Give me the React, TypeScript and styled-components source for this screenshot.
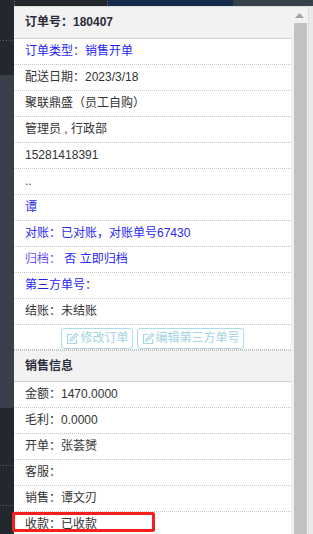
import React from "react";
import styled, { createGlobalStyle } from "styled-components";

const Global = createGlobalStyle`
  html, body { margin: 0; padding: 0; background: #23272e; }
  body { font-family: "Liberation Sans", "Noto Sans CJK SC", sans-serif; }
  * { box-sizing: border-box; }
`;

const Page = styled.div`
  width: 313px;
  height: 534px;
  overflow: hidden;
  display: flex;
  flex-direction: column;
`;

const TopStrip = styled.div`
  height: 6px;
  flex: 0 0 6px;
  background:
    linear-gradient(#888, #888) 14px 1px / 1px 1px no-repeat,
    linear-gradient(#888, #888) 14px 4px / 1px 1px no-repeat,
    linear-gradient(#888, #888) 107px 1px / 1px 1px no-repeat,
    linear-gradient(#888, #888) 107px 4px / 1px 1px no-repeat,
    linear-gradient(to right, #23272e 0 107px, #152a4d 107px 233px, #36414b 233px);
`;

const Body = styled.div`
  flex: 1;
  display: flex;
  min-height: 0;
`;

const LeftRail = styled.div`
  flex: 0 0 14px;
  background:
    repeating-linear-gradient(to right, #5a6068 0 1px, transparent 1px 3px) 0 34px / 14px 1px no-repeat,
    repeating-linear-gradient(to right, #5a6068 0 1px, transparent 1px 3px) 0 459px / 14px 1px no-repeat,
    repeating-linear-gradient(to right, #5a6068 0 1px, transparent 1px 3px) 0 499px / 14px 1px no-repeat,
    linear-gradient(to bottom, #23272e 0 69px, #36414b 69px 402px, #23272e 402px);
`;

const Panel = styled.div`
  flex: 0 0 294px;
  display: flex;
  border-top: 1px solid #dcdcdc;
  background: #fff;
  position: relative;
`;

const RightGutter = styled.div`
  flex: 1;
  background: #e9e9e9;
  border-left: 1px solid #dcdcdc;
`;

const Content = styled.div`
  flex: 0 0 277px;
  display: flex;
  flex-direction: column;
  color: #333;
  font-size: 12px;
`;

const SectionHeader = styled.div<{ $topDotted?: boolean }>`
  height: 32px;
  padding: 0 11px;
  line-height: 31px;
  background: #f2f2f2;
  border-bottom: 1px solid #cfcfcf;
  font-weight: bold;
  color: #2b2b3a;
  font-size: 12px;
  ${(p) => (p.$topDotted ? "border-top: 1px dotted #c4c4c4;" : "")}
`;

const Row = styled.div<{ $color?: string }>`
  height: 26px;
  line-height: 25px;
  padding: 0 11px;
  border-bottom: 1px dotted #c4c4c4;
  color: ${(p) => p.$color || "#333"};
  white-space: nowrap;
  position: relative;
`;

const Violet = styled.span`
  color: #6a4cf6;
`;

const ButtonRow = styled.div`
  height: 26px;
  display: flex;
  justify-content: center;
  align-items: flex-start;
  gap: 4px;
  padding-top: 3px;
  border-bottom: 1px dotted #c4c4c4;
`;

const GhostButton = styled.button`
  height: 21px;
  display: inline-flex;
  align-items: center;
  gap: 1px;
  padding: 0 3px;
  background: #fff;
  border: 1px solid #acdbe9;
  border-radius: 3px;
  color: #a2d4e4;
  font-family: "Liberation Sans", "Noto Sans CJK SC", sans-serif;
  font-size: 12px;
  line-height: 19px;
  cursor: default;
`;

const Highlight = styled.div`
  position: absolute;
  left: -2px;
  top: 0px;
  width: 143px;
  height: 20px;
  border: 3px solid #f5201d;
  border-radius: 2px;
  pointer-events: none;
`;

const Scrollbar = styled.div`
  flex: 0 0 17px;
  background: #f1f1f1;
  display: flex;
  flex-direction: column;
  align-items: center;
`;

const ArrowBox = styled.div`
  height: 16px;
  width: 100%;
  display: flex;
  align-items: center;
  justify-content: center;
`;

const Thumb = styled.div`
  width: 13px;
  margin-left: 1px;
  flex: 1;
  background: #c1c1c1;
`;

const EditIcon = () => (
  <svg width="14" height="14" viewBox="0 0 14 14" fill="none" stroke="#a6d6e6" strokeWidth="1.2">
    <path d="M7 2.5H2.5v9h9V7" />
    <path d="M11 1.5l1.5 1.5L7 8.5 5 9l.5-2z" />
  </svg>
);

export default function App() {
  return (
    <>
      <Global />
      <Page>
        <TopStrip />
        <Body>
          <LeftRail />
          <Panel>
            <Content>
              <SectionHeader>订单号：180407</SectionHeader>
              <Row $color="#1f1ff5">订单类型：销售开单</Row>
              <Row>配送日期：2023/3/18</Row>
              <Row>聚联鼎盛（员工自购）</Row>
              <Row>管理员 , 行政部</Row>
              <Row>15281418391</Row>
              <Row $color="#7a1f4f">..</Row>
              <Row $color="#1f1ff5">谭</Row>
              <Row $color="#2a2af2">对账：已对账，对账单号67430</Row>
              <Row $color="#2a2af2">
                <Violet>归档：</Violet> 否 立即归档
              </Row>
              <Row $color="#1f1ff5">第三方单号：</Row>
              <Row>结账：未结账</Row>
              <ButtonRow>
                <GhostButton>
                  <EditIcon />
                  修改订单
                </GhostButton>
                <GhostButton>
                  <EditIcon />
                  编辑第三方单号
                </GhostButton>
              </ButtonRow>
              <SectionHeader $topDotted>销售信息</SectionHeader>
              <Row>金额：1470.0000</Row>
              <Row>毛利：0.0000</Row>
              <Row>开单：张荟赟</Row>
              <Row>客服：</Row>
              <Row>销售：谭文刃</Row>
              <Row>
                收款：已收款
                <Highlight />
              </Row>
            </Content>
            <Scrollbar>
              <ArrowBox>
                <svg width="9" height="5" viewBox="0 0 9 5">
                  <path d="M0 5L4.5 0L9 5Z" fill="#a3a3a3" />
                </svg>
              </ArrowBox>
              <Thumb />
            </Scrollbar>
          </Panel>
          <RightGutter />
        </Body>
      </Page>
    </>
  );
}
